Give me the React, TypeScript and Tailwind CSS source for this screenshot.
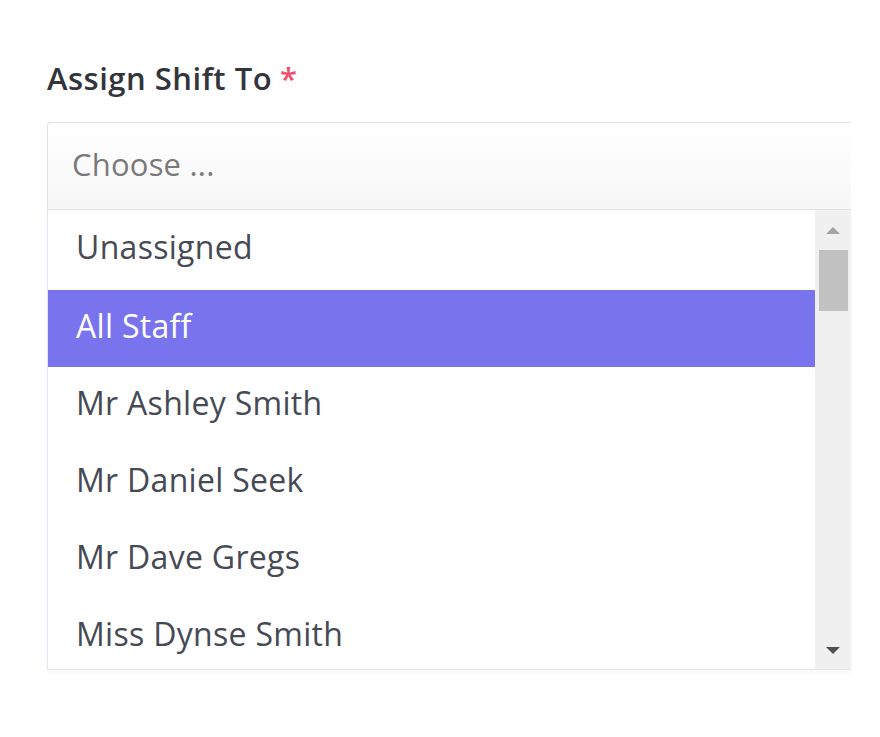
import React from 'react';

const staff = ['Unassigned', 'All Staff', 'Mr Ashley Smith', 'Mr Daniel Seek', 'Mr Dave Gregs', 'Miss Dynse Smith'];

export default function App() {
  const selected = 'All Staff';

  return (
    <div className="w-[880px] h-[737px] bg-white pl-[47px] pt-[58px]">
      <label
        className="block text-[31px] leading-[40px] font-semibold text-[#33353d] tracking-[0.5px]"
        style={{ fontFamily: '"Open Sans", "Noto Sans", sans-serif' }}
      >
        Assign Shift To<span className="ml-[8px] text-[#f0506e]">*</span>
      </label>

      <div className="mt-[24px] w-[804px]" style={{ fontFamily: '"Open Sans", "Noto Sans", sans-serif' }}>
        {/* select box */}
        <div className="h-[88px] flex items-center pl-[24px] pb-[4px] border border-[#e2e2e6] border-r-0 rounded-tl-[4px] bg-gradient-to-b from-white to-[#f7f7f7] text-[31px] tracking-[0.2px] text-[#7a7a7a]">
          Choose ...
        </div>

        {/* dropdown list */}
        <div className="flex h-[460px] border-l border-b border-[#e3e5ee] shadow-[0_2px_4px_rgba(0,0,0,0.04)] overflow-hidden">
          <ul className="flex-1">
            {staff.map((name) => (
              <li
                key={name}
                className={`shrink-0 flex items-center pl-[28px] pb-[6px] text-[32px] tracking-[0.3px] ${
                  name === selected ? 'bg-[#7974ee] text-white' : 'text-[#464a55]'
                } ${name === 'Unassigned' ? 'h-[80px]' : 'h-[77px]'}`}
              >
                {name}
              </li>
            ))}
          </ul>

          {/* scrollbar */}
          <div className="w-[36px] bg-[#f0f0f0] flex flex-col items-center">
            <svg width="16" height="10" viewBox="0 0 16 10" className="mt-[16px]">
              <path d="M8 1 L15 8 H1 Z" fill="#a3a3a3" />
            </svg>
            <div className="mt-[14px] w-[29px] h-[61px] bg-[#c1c1c1]" />
            <div className="flex-1" />
            <svg width="16" height="10" viewBox="0 0 16 10" className="mb-[14px]">
              <path d="M1 2 H15 L8 9 Z" fill="#505050" />
            </svg>
          </div>
        </div>
      </div>
    </div>
  );
}
